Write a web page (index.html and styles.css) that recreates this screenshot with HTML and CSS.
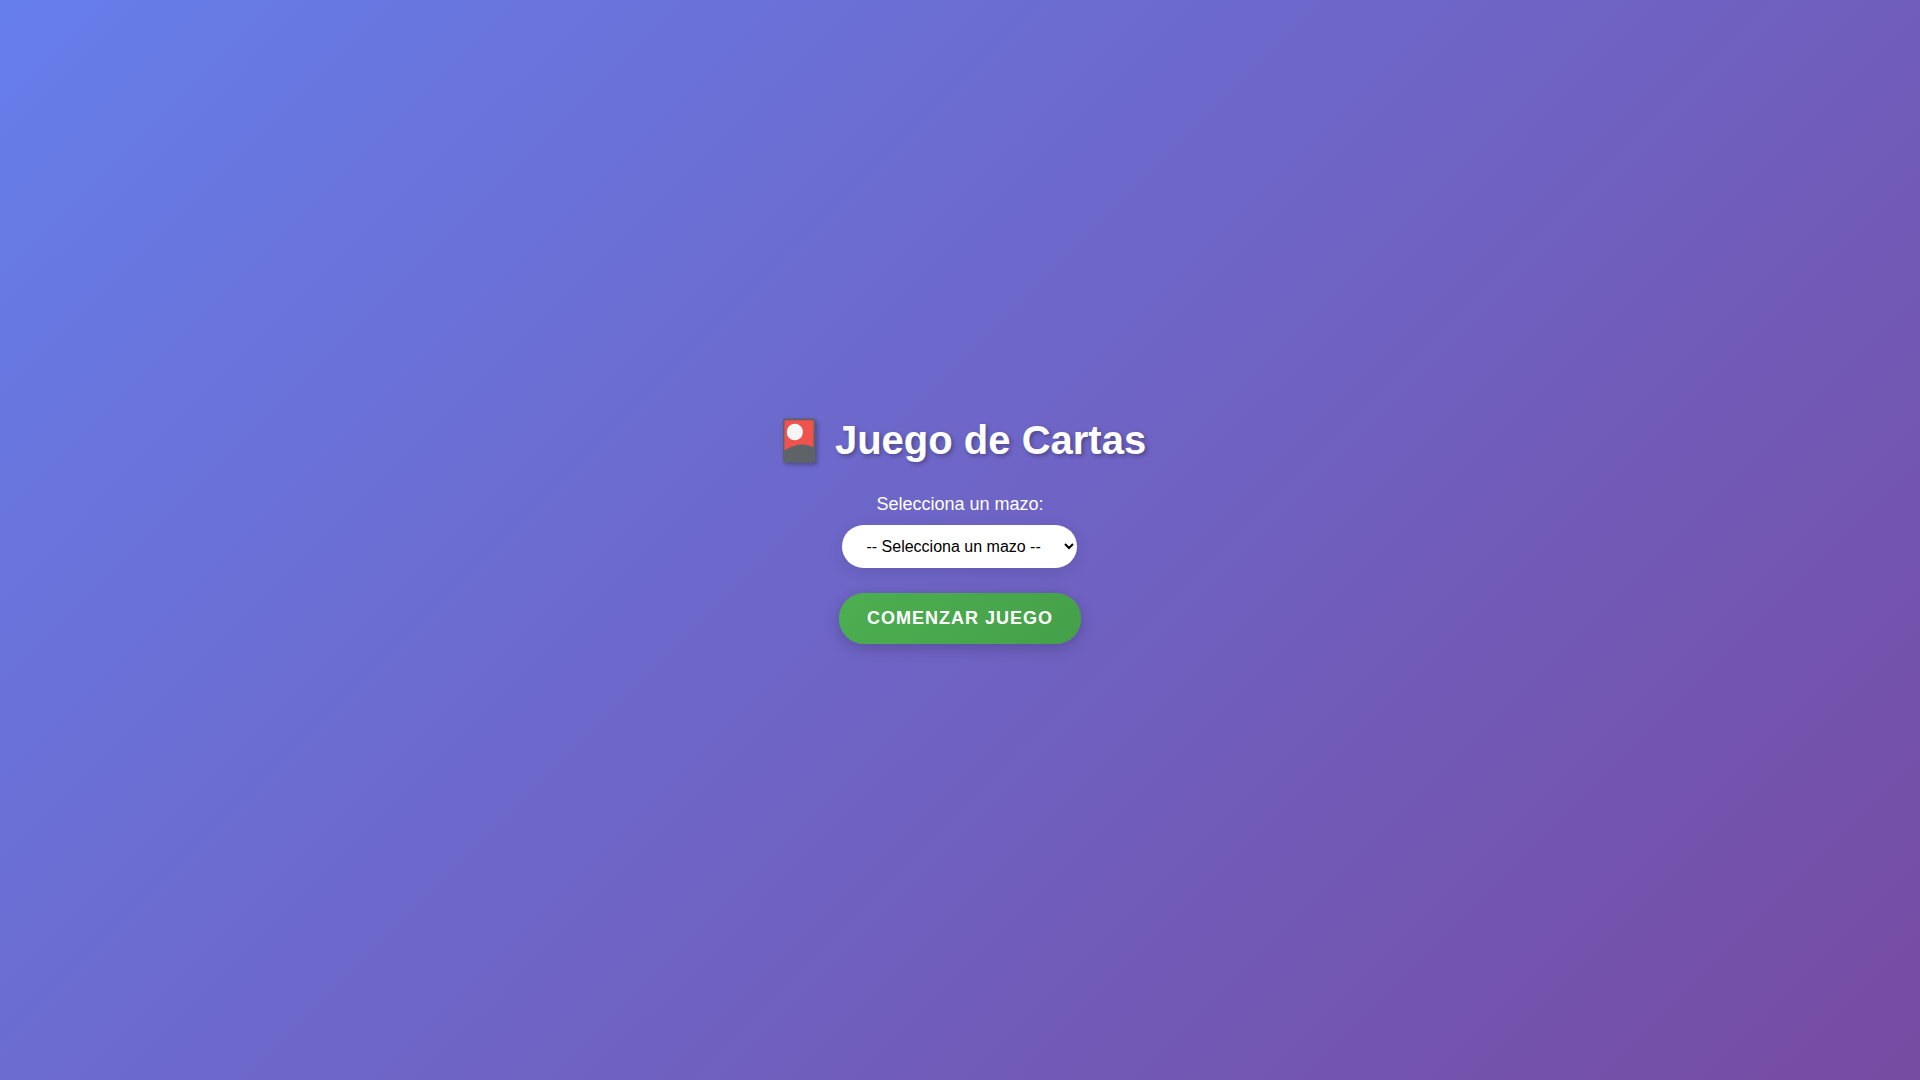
FILE: index.html
```html
<!DOCTYPE html>
<html lang="es">
<head>
<meta charset="UTF-8">
<meta name="viewport" content="width=device-width, initial-scale=1">
<title>Juego de Cartas</title>
<link rel="stylesheet" href="styles.css">
</head>
<body>
<main class="start">
  <h1 class="title">🎴 Juego de Cartas</h1>
  <form class="form">
    <label class="label" for="deck">Selecciona un mazo:</label>
    <select class="deck" id="deck">
      <option>-- Selecciona un mazo --</option>
    </select>
    <button class="play" type="button">Comenzar juego</button>
  </form>
</main>
</body>
</html>
```
FILE: styles.css
```css
* {
  box-sizing: border-box;
  margin: 0;
  padding: 0;
}

body {
  min-height: 100vh;
  display: flex;
  align-items: center;
  justify-content: center;
  background: linear-gradient(135deg, #667eea 0%, #764ba2 100%);
  color: #fff;
  font-family: "Liberation Sans", Arial, sans-serif;
}

.start,
.form {
  display: flex;
  flex-direction: column;
  align-items: center;
}

.start {
  padding-bottom: 20px;
}

.title {
  margin-bottom: 30px;
  font-size: 40px;
  line-height: 46px;
  text-shadow: 2px 2px 4px rgba(0, 0, 0, 0.3);
}

.label {
  margin-bottom: 10px;
  font-size: 18px;
  line-height: 22px;
}

.deck {
  min-width: 200px;
  margin-bottom: 25px;
  padding: 12px 20px;
  border: none;
  border-radius: 25px;
  background: #fff;
  color: #000;
  font-family: inherit;
  font-size: 16px;
  box-shadow: 0 4px 15px rgba(0, 0, 0, 0.1);
}

.play {
  padding: 15px 28px;
  border: none;
  border-radius: 25px;
  background: linear-gradient(135deg, #4caf50, #45a049);
  color: #fff;
  font-family: inherit;
  font-size: 18px;
  font-weight: bold;
  letter-spacing: 1px;
  text-transform: uppercase;
  box-shadow: 0 4px 15px rgba(0, 0, 0, 0.2);
  cursor: pointer;
}
```
